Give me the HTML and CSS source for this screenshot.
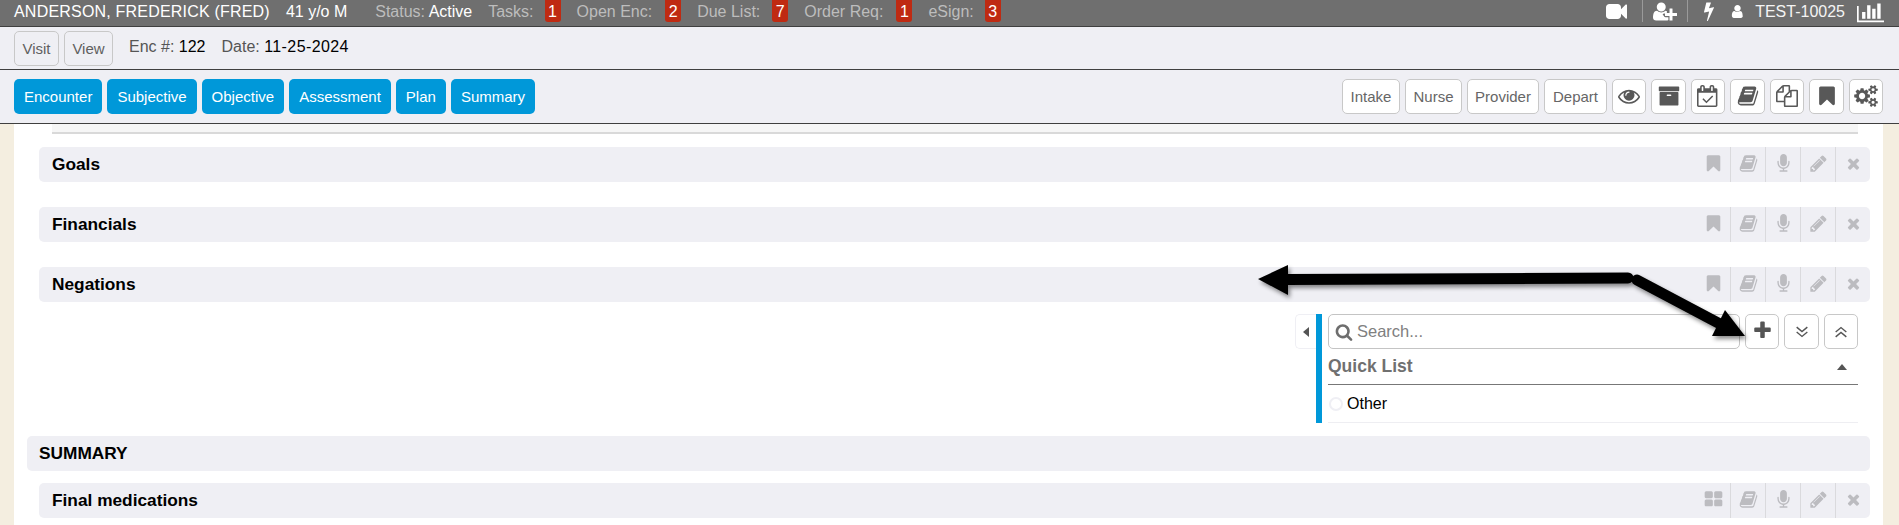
FILE: index.html
```html
<!DOCTYPE html>
<html lang="en">
<head>
<meta charset="utf-8">
<title>Encounter</title>
<link rel="stylesheet" href="styles.css">
</head>
<body>
<svg class="sprite" xmlns="http://www.w3.org/2000/svg">
  <symbol id="i-eye" viewBox="0 0 1792 1792"><path d="M1664 960q-152-236-381-353 61 104 61 225 0 185-131.500 316.500t-316.500 131.500-316.500-131.500-131.500-316.500q0-121 61-225-229 117-381 353 133 205 333.500 326.500t434.500 121.500 434.500-121.500 333.500-326.500zm-720-384q0-20-14-34t-34-14q-125 0-214.500 89.500t-89.500 214.500q0 20 14 34t34 14 34-14 14-34q0-86 61-147t147-61q20 0 34-14t14-34zm848 384q0 34-20 69-140 230-376.500 368.500t-499.500 138.500-499.500-139-376.500-368q-20-35-20-69t20-69q140-229 376.500-368t499.500-139 499.500 139 376.500 368q20 35 20 69z"/></symbol>
  <symbol id="i-bookmark" viewBox="0 0 1792 1792"><path d="M1420 128q23 0 44 9 33 13 52.500 41t19.500 62v1289q0 34-19.500 62t-52.500 41q-19 8-44 8-48 0-83-32l-441-424-441 424q-36 33-83 33-23 0-44-9-33-13-52.500-41t-19.500-62v-1289q0-34 19.500-62t52.500-41q21-9 44-9h1048z"/></symbol>
  <symbol id="i-plus" viewBox="0 0 1792 1792"><path d="M1600 736v192q0 40-28 68t-68 28h-416v416q0 40-28 68t-68 28h-192q-40 0-68-28t-28-68v-416h-416q-40 0-68-28t-28-68v-192q0-40 28-68t68-28h416v-416q0-40 28-68t68-28h192q40 0 68 28t28 68v416h416q40 0 68 28t28 68z"/></symbol>
  <symbol id="i-times" viewBox="0 0 1792 1792"><path d="M1490 1322q0 40-28 68l-136 136q-28 28-68 28t-68-28l-294-294-294 294q-28 28-68 28t-68-28l-136-136q-28-28-28-68t28-68l294-294-294-294q-28-28-28-68t28-68l136-136q28-28 68-28t68 28l294 294 294-294q28-28 68-28t68 28l136 136q28 28 28 68t-28 68l-294 294 294 294q28 28 28 68z"/></symbol>
  <symbol id="i-pencil" viewBox="0 0 1792 1792"><path d="M491 1536l91-91-235-235-91 91v107h128v128h107zm523-928q0-22-22-22-10 0-17 7l-542 542q-7 7-7 17 0 22 22 22 10 0 17-7l542-542q7-7 7-17zm-54-192l416 416-832 832h-416v-416zm683 96q0 53-37 90l-166 166-416-416 166-165q36-38 90-38 53 0 91 38l235 234q37 39 37 91z"/></symbol>
  <symbol id="i-search" viewBox="0 0 1792 1792"><path d="M1216 832q0-185-131.500-316.500t-316.500-131.500-316.500 131.500-131.500 316.500 131.500 316.500 316.500 131.500 316.500-131.500 131.500-316.500zm512 832q0 52-38 90t-90 38q-54 0-90-38l-343-342q-179 124-399 124-143 0-273.500-55.500t-225-150-150-225-55.500-273.500 55.500-273.500 150-225 225-150 273.500-55.500 273.500 55.500 225 150 150 225 55.500 273.500q0 220-124 399l343 343q37 37 37 90z"/></symbol>
  <symbol id="i-user" viewBox="0 0 1792 1792"><path d="M1536 1399q0 109-62.500 187t-166.500 78h-854q-104 0-166.500-78t-62.500-187q0-85 8.500-160.500t31.500-152 58.500-131 94-89 134.500-34.500q131 128 313 128t313-128q76 0 134.500 34.500t94 89 58.500 131 31.500 152 8.500 160.500zm-256-887q0 159-112.500 271.500t-271.500 112.500-271.500-112.500-112.500-271.500 112.500-271.500 271.500-112.500 271.500 112.500 112.500 271.500z"/></symbol>
  <symbol id="i-video" viewBox="0 0 1792 1792"><path d="M1792 352v1088q0 42-39 59-13 5-25 5-27 0-45-19l-403-403v166q0 119-84.500 203.500t-203.500 84.500h-704q-119 0-203.500-84.500t-84.500-203.500v-704q0-119 84.500-203.500t203.500-84.500h704q119 0 203.500 84.500t84.500 203.500v165l403-402q18-19 45-19 12 0 25 5 39 17 39 59z"/></symbol>
  <symbol id="i-bolt" viewBox="0 0 1792 1792"><path d="M1333 566q18 20 7 44l-540 1157q-13 25-42 25-4 0-14-2-17-5-25.500-19t-4.500-30l197-808-406 101q-4 1-12 1-18 0-31-11-18-15-13-39l201-825q4-14 16-23t28-9h328q19 0 32 12.500t13 29.500q0 8-5 18l-171 463 396-98q8-2 12-2 19 0 34 15z"/></symbol>
  <symbol id="i-mic" viewBox="0 0 1792 1792"><path d="M1472 704v128q0 221-147.500 384.500t-364.500 187.500v132h256q26 0 45 19t19 45-19 45-45 19h-640q-26 0-45-19t-19-45 19-45 45-19h256v-132q-217-24-364.500-187.500t-147.500-384.500v-128q0-26 19-45t45-19 45 19 19 45v128q0 185 131.500 316.500t316.500 131.500 316.500-131.500 131.500-316.500v-128q0-26 19-45t45-19 45 19 19 45zm-256-384v512q0 132-94 226t-226 94-226-94-94-226v-512q0-132 94-226t226-94 226 94 94 226z"/></symbol>
  <symbol id="i-book" viewBox="0 0 1792 1792"><path d="M1703 478q40 57 18 129l-275 906q-19 64-76.500 107.500t-122.500 43.500h-923q-77 0-148.500-53.500t-99.500-131.500q-24-67-2-127 0-4 3-27t4-37q1-8-3-21.500t-3-19.500q2-11 8-21t16.500-23.500 16.500-23.500q23-38 45-91.500t30-91.500q3-10 .5-30t-.5-28q3-11 17-28t17-23q21-36 42-92t25-90q1-9-2.500-32t.5-28q4-13 22-30.500t22-22.500q19-26 42.500-84.500t27.500-96.500q1-8-3-25.500t-2-26.500q2-8 9-18t18-23 17-21q8-12 16.500-30.500t15-35 16-36 19.500-32 26.500-23.500 36-11.500 47.500 5.500l-1 3q38-9 51-9h761q74 0 114 56t18 130l-274 906q-36 119-71.500 153.500t-128.500 34.500h-869q-27 0-38 15-11 16-1 43 24 70 144 70h923q29 0 56-15.500t35-41.500l300-987q7-22 5-57 38 15 59 43zm-1064 2q-4 13 2 22.500t20 9.500h608q13 0 25.500-9.500t16.500-22.500l21-64q4-13-2-22.500t-20-9.500h-608q-13 0-25.500 9.500t-16.500 22.500zm-83 256q-4 13 2 22.500t20 9.500h608q13 0 25.500-9.500t16.500-22.500l21-64q4-13-2-22.500t-20-9.500h-608q-13 0-25.500 9.500t-16.500 22.500z"/></symbol>
  <symbol id="i-files" viewBox="0 0 1792 1792"><path d="M1696 384q40 0 68 28t28 68v1216q0 40-28 68t-68 28h-960q-40 0-68-28t-28-68v-288h-544q-40 0-68-28t-28-68v-672q0-40 20-88t48-76l408-408q28-28 76-48t88-20h416q40 0 68 28t28 68v328q68-40 128-40h416zm-544 213l-299 299h299v-299zm-640-384l-299 299h299v-299zm196 647l316-316v-416h-384v416q0 40-28 68t-68 28h-416v640h512v-256q0-40 20-88t48-76zm956 804v-1152h-384v416q0 40-28 68t-68 28h-416v640h896z"/></symbol>
  <symbol id="i-archive" viewBox="0 0 1792 1792"><path d="M1088 832q0-26-19-45t-45-19h-256q-26 0-45 19t-19 45 19 45 45 19h256q26 0 45-19t19-45zm576-192v960q0 26-19 45t-45 19h-1408q-26 0-45-19t-19-45v-960q0-26 19-45t45-19h1408q26 0 45 19t19 45zm64-448v256q0 26-19 45t-45 19h-1536q-26 0-45-19t-19-45v-256q0-26 19-45t45-19h1536q26 0 45 19t19 45z"/></symbol>
  <symbol id="i-calendar" viewBox="0 0 1792 1792"><path d="M1303 964l-512 512q-10 9-23 9t-23-9l-288-288q-9-10-9-23t9-22l46-46q9-9 22-9t23 9l220 220 444-444q10-9 23-9t22 9l46 46q9 9 9 22t-9 23zm-1175 700h1408v-1024h-1408v1024zm384-1216v-288q0-14-9-23t-23-9h-64q-14 0-23 9t-9 23v288q0 14 9 23t23 9h64q14 0 23-9t9-23zm768 0v-288q0-14-9-23t-23-9h-64q-14 0-23 9t-9 23v288q0 14 9 23t23 9h64q14 0 23-9t9-23zm384-64v1280q0 52-38 90t-90 38h-1408q-52 0-90-38t-38-90v-1280q0-52 38-90t90-38h128v-96q0-66 47-113t113-47h64q66 0 113 47t47 113v96h384v-96q0-66 47-113t113-47h64q66 0 113 47t47 113v96h128q52 0 90 38t38 90z"/></symbol>
  <symbol id="i-cogs" viewBox="0 0 1920 1792"><path d="M896 896q0-106-75-181t-181-75-181 75-75 181 75 181 181 75 181-75 75-181zm768 512q0-52-38-90t-90-38-90 38-38 90q0 53 37.500 90.500t90.500 37.500 90.500-37.500 37.500-90.500zm0-1024q0-52-38-90t-90-38-90 38-38 90q0 53 37.500 90.500t90.500 37.500 90.500-37.500 37.500-90.500zm-384 421v185q0 10-7 19.500t-16 10.500l-155 24q-11 35-32 76 34 48 90 115 7 11 7 20 0 12-7 19-23 30-82.500 89.500t-78.500 59.500q-11 0-21-7l-115-90q-37 19-77 31-11 108-23 155-7 24-30 24h-186q-11 0-20-7.500t-10-17.500l-23-153q-34-10-75-31l-118 89q-7 7-20 7-11 0-21-8-144-133-144-160 0-9 7-19 10-14 41-53t47-61q-23-44-35-82l-152-24q-10-1-17-9.500t-7-19.500v-185q0-10 7-19.500t16-10.500l155-24q11-35 32-76-34-48-90-115-7-11-7-20 0-12 7-20 22-30 82-89t79-59q11 0 21 7l115 90q34-18 77-32 11-108 23-154 7-24 30-24h186q11 0 20 7.500t10 17.500l23 153q34 10 75 31l118-89q8-7 20-7 11 0 21 8 144 133 144 160 0 8-7 19-12 16-42 54t-45 60q23 48 34 82l152 23q10 2 17 10.500t7 19.500zm640 533v140q0 16-149 31-12 27-30 52 51 113 51 138 0 4-4 7-122 71-124 71-8 0-46-47t-52-68q-20 2-30 2t-30-2q-14 21-52 68t-46 47q-2 0-124-71-4-3-4-7 0-25 51-138-18-25-30-52-149-15-149-31v-140q0-16 149-31 13-29 30-52-51-113-51-138 0-4 4-7 4-2 35-20t59-34 30-16q8 0 46 46.500t52 67.500q20-2 30-2t30 2q51-71 92-112l6-2q4 0 124 70 4 3 4 7 0 25-51 138 17 23 30 52 149 15 149 31zm0-1024v140q0 16-149 31-12 27-30 52 51 113 51 138 0 4-4 7-122 71-124 71-8 0-46-47t-52-68q-20 2-30 2t-30-2q-14 21-52 68t-46 47q-2 0-124-71-4-3-4-7 0-25 51-138-18-25-30-52-149-15-149-31v-140q0-16 149-31 13-29 30-52-51-113-51-138 0-4 4-7 4-2 35-20t59-34 30-16q8 0 46 46.500t52 67.500q20-2 30-2t30 2q51-71 92-112l6-2q4 0 124 70 4 3 4 7 0 25-51 138 17 23 30 52 149 15 149 31z"/></symbol>
  <symbol id="i-userplus" viewBox="0 0 2048 1792"><path d="M704 896q-159 0-271.500-112.500t-112.500-271.500 112.500-271.500 271.500-112.500 271.500 112.500 112.500 271.500-112.500 271.500-271.500 112.500zm960 128h352q13 0 22.500 9.500t9.500 22.500v192q0 13-9.500 22.500t-22.500 9.500h-352v352q0 13-9.500 22.500t-22.500 9.500h-192q-13 0-22.500-9.500t-9.500-22.500v-352h-352q-13 0-22.500-9.500t-9.500-22.500v-192q0-13 9.500-22.500t22.500-9.500h352v-352q0-13 9.500-22.500t22.500-9.500h192q13 0 22.500 9.500t9.500 22.500v352zm-736 224q0 52 38 90t90 38h256v238q-68 50-171 50h-874q-121 0-194-69t-73-190q0-53 3.500-103.500t14-109 26.500-108.500 43-97.500 62-81 85.500-53.500 111.500-20q19 0 39 17 79 61 154.500 91.500t164.500 30.500 164.500-30.500 154.500-91.500q20-17 39-17 78 0 133 33-11 42-11 99v96h-224q-52 0-90 38t-38 90z"/></symbol>
  <symbol id="i-chart" viewBox="0 0 2048 1792"><path d="M640 896v512h-256v-512h256zm384-512v1024h-256v-1024h256zm1024 1152v128h-2048v-1216h128v1088h1920zm-640-896v768h-256v-768h256zm384-384v1152h-256v-1152h256z"/></symbol>
  <symbol id="i-grid" viewBox="0 0 1792 1792"><path d="M832 1024v384q0 52-38 90t-90 38h-512q-52 0-90-38t-38-90v-384q0-52 38-90t90-38h512q52 0 90 38t38 90zm0-768v384q0 52-38 90t-90 38h-512q-52 0-90-38t-38-90v-384q0-52 38-90t90-38h512q52 0 90 38t38 90zm896 768v384q0 52-38 90t-90 38h-512q-52 0-90-38t-38-90v-384q0-52 38-90t90-38h512q52 0 90 38t38 90zm0-768v384q0 52-38 90t-90 38h-512q-52 0-90-38t-38-90v-384q0-52 38-90t90-38h512q52 0 90 38t38 90z"/></symbol>
  <symbol id="i-down" viewBox="0 0 18 18"><path d="M3 3.500l6 5 6-5M3 9l6 5 6-5" fill="none" stroke="currentColor" stroke-width="1.600"/></symbol>
  <symbol id="i-up" viewBox="0 0 18 18"><path d="M3 9l6-5 6 5M3 14.500l6-5 6 5" fill="none" stroke="currentColor" stroke-width="1.600"/></symbol>
</svg>

<header class="topbar">
  <span class="patient">ANDERSON, FREDERICK (FRED)</span>
  <span class="age">41 y/o M</span>
  <span class="label status">Status: <b>Active</b></span>
  <span class="label tasks">Tasks:</span><span class="badge">1</span>
  <span class="label stat">Open Enc:</span><span class="badge badge-far">2</span>
  <span class="label stat">Due List:</span><span class="badge badge-mid">7</span>
  <span class="label stat">Order Req:</span><span class="badge badge-far">1</span>
  <span class="label stat">eSign:</span><span class="badge">3</span>
  <div class="top-right">
    <svg class="ti ti-video"><use href="#i-video"/></svg>
    <span class="top-sep"></span>
    <svg class="ti ti-userplus"><use href="#i-userplus"/></svg>
    <span class="top-sep"></span>
    <svg class="ti ti-bolt"><use href="#i-bolt"/></svg>
    <svg class="ti ti-user"><use href="#i-user"/></svg>
    <span class="account">TEST-10025</span>
    <svg class="ti ti-chart"><use href="#i-chart"/></svg>
  </div>
</header>

<div class="subbar">
  <button class="ghost ghost-visit">Visit</button>
  <button class="ghost ghost-view">View</button>
  <span class="meta meta-enc">Enc #: <b>122</b></span>
  <span class="meta meta-date">Date: <b>11-25-2024</b></span>
</div>

<nav class="navbar">
  <a class="tab">Encounter</a>
  <a class="tab">Subjective</a>
  <a class="tab">Objective</a>
  <a class="tab">Assessment</a>
  <a class="tab">Plan</a>
  <a class="tab">Summary</a>
  <div class="tools">
    <button class="tool tool-intake">Intake</button>
    <button class="tool tool-nurse">Nurse</button>
    <button class="tool tool-provider">Provider</button>
    <button class="tool tool-depart">Depart</button>
    <button class="tool tool-icon"><svg><use href="#i-eye"/></svg></button>
    <button class="tool tool-icon tool-icon-w"><svg><use href="#i-archive"/></svg></button>
    <button class="tool tool-icon"><svg><use href="#i-calendar"/></svg></button>
    <button class="tool tool-icon tool-icon-w"><svg><use href="#i-book"/></svg></button>
    <button class="tool tool-icon"><svg><use href="#i-files"/></svg></button>
    <button class="tool tool-icon tool-icon-w"><svg><use href="#i-bookmark"/></svg></button>
    <button class="tool tool-icon"><svg class="wide"><use href="#i-cogs"/></svg></button>
  </div>
</nav>

<main class="page">
  <div class="sheet">
    <div class="stub"></div>

    <section class="row">
      <h3>Goals</h3>
      <div class="row-actions">
        <span class="act"><svg><use href="#i-bookmark"/></svg></span>
        <span class="act"><svg><use href="#i-book"/></svg></span>
        <span class="act"><svg><use href="#i-mic"/></svg></span>
        <span class="act"><svg><use href="#i-pencil"/></svg></span>
        <span class="act"><svg><use href="#i-times"/></svg></span>
      </div>
    </section>

    <section class="row row-next">
      <h3>Financials</h3>
      <div class="row-actions">
        <span class="act"><svg><use href="#i-bookmark"/></svg></span>
        <span class="act"><svg><use href="#i-book"/></svg></span>
        <span class="act"><svg><use href="#i-mic"/></svg></span>
        <span class="act"><svg><use href="#i-pencil"/></svg></span>
        <span class="act"><svg><use href="#i-times"/></svg></span>
      </div>
    </section>

    <section class="row row-next">
      <h3>Negations</h3>
      <div class="row-actions">
        <span class="act"><svg><use href="#i-bookmark"/></svg></span>
        <span class="act"><svg><use href="#i-book"/></svg></span>
        <span class="act"><svg><use href="#i-mic"/></svg></span>
        <span class="act"><svg><use href="#i-pencil"/></svg></span>
        <span class="act"><svg><use href="#i-times"/></svg></span>
      </div>
    </section>

    <div class="picker-wrap">
      <div class="picker-tab"><span class="caret-left"></span></div>
      <div class="picker">
        <div class="picker-top">
          <div class="search">
            <svg><use href="#i-search"/></svg>
            <span>Search...</span>
          </div>
          <button class="square sq-plus"><svg><use href="#i-plus"/></svg></button>
          <button class="square sq-wide"><svg><use href="#i-down"/></svg></button>
          <button class="square"><svg><use href="#i-up"/></svg></button>
        </div>
        <div class="quick-head">
          <strong>Quick List</strong>
          <span class="caret-up"></span>
        </div>
        <label class="quick-item"><span class="radio"></span>Other</label>
      </div>
    </div>

    <section class="row row-summary">
      <h2>SUMMARY</h2>
    </section>

    <section class="row row-final">
      <h3>Final medications</h3>
      <div class="row-actions">
        <span class="act"><svg><use href="#i-grid"/></svg></span>
        <span class="act"><svg><use href="#i-book"/></svg></span>
        <span class="act"><svg><use href="#i-mic"/></svg></span>
        <span class="act"><svg><use href="#i-pencil"/></svg></span>
        <span class="act"><svg><use href="#i-times"/></svg></span>
      </div>
    </section>
  </div>
</main>

<svg class="arrows" width="1899" height="525" xmlns="http://www.w3.org/2000/svg">
  <path class="arrow-line" d="M1628 278 L1286 279.500"/>
  <polygon points="1258,279 1288,265 1288,295"/>
  <path class="arrow-line" d="M1637 280 L1722 325"/>
  <polygon points="1725,310 1712,336 1745,336"/>
</svg>
</body>
</html>
```
FILE: styles.css
```css
* { box-sizing: border-box; }
html, body { margin: 0; padding: 0; }
body {
  width: 1899px;
  height: 525px;
  overflow: hidden;
  position: relative;
  background: #fff;
  font-family: "Liberation Sans", Arial, sans-serif;
  color: #000;
}
button { font-family: inherit; margin: 0; cursor: pointer; }
.sprite { display: none; }

/* top bar */
.topbar {
  height: 27px;
  display: flex;
  align-items: flex-start;
  padding-left: 14px;
  background: #6f6f6f;
  border-bottom: 1px solid #3f3f3f;
  color: #fff;
  font-size: 16px;
  line-height: 23px;
}
.patient { letter-spacing: .2px; }
.age { margin-left: 16px; }
.label { color: #bdbdbd; }
.label b { color: #fff; font-weight: normal; }
.status { margin-left: 28px; }
.tasks { margin-left: 16px; }
.stat { margin-left: 16px; }
.badge {
  width: 16px;
  height: 22px;
  margin-left: 11px;
  background: #bf2a12;
  border-radius: 0 0 3px 3px;
  color: #fff;
  text-align: center;
}
.badge-mid { margin-left: 12px; }
.badge-far { margin-left: 13px; }
.top-right {
  margin-left: auto;
  height: 26px;
  padding-right: 15px;
  display: flex;
  align-items: flex-start;
}
.ti { fill: #fff; display: block; }
.ti-video { width: 21px; height: 21px; margin-top: 1px; }
.top-sep { width: 1px; height: 22px; background: #9a9a9a; margin: 0 10px 0 15px; }
.ti-userplus { width: 24px; height: 21px; margin-top: 1px; }
.ti-userplus + .top-sep { margin: 0 14px 0 10px; }
.ti-bolt { width: 20px; height: 20px; margin-top: 1px; margin-right: 11px; margin-left: -3px; }
.ti-user { width: 15px; height: 17px; margin-top: 3px; }
.account { margin-left: 10px; color: #f4f4f4; }
.ti-chart { width: 27px; height: 24px; margin-left: 12px; }

/* visit bar */
.subbar {
  height: 43px;
  display: flex;
  align-items: flex-start;
  padding: 4px 0 0 14px;
  background: #efeff4;
  border-bottom: 1px solid #3f3f3f;
}
.ghost {
  height: 35px;
  padding: 0;
  background: #efeff4;
  border: 1px solid #c8c8c8;
  border-radius: 5px;
  color: #5f5f5f;
  font-size: 15px;
}
.ghost-visit { width: 45px; }
.ghost-view { width: 49px; margin-left: 5px; }
.meta { font-size: 16px; line-height: 31px; color: #555; }
.meta b { font-weight: normal; color: #000; }
.meta-enc { margin-left: 16px; }
.meta-date { margin-left: 16px; }
.meta-date b { letter-spacing: .4px; }

/* nav */
.navbar {
  height: 54px;
  display: flex;
  align-items: flex-start;
  gap: 5px;
  padding: 9px 16px 0 14px;
  background: #efeff4;
  border-bottom: 1px solid #3f3f3f;
}
.tab {
  height: 35px;
  padding: 0 10px;
  border-radius: 5px;
  background: #0098d9;
  color: #fff;
  font-size: 15px;
  line-height: 35px;
}
.tools { margin-left: auto; display: flex; gap: 5px; }
.tool {
  height: 35px;
  padding: 0;
  background: #fff;
  border: 1px solid #c8c8c8;
  border-radius: 5px;
  color: #666;
  font-size: 15px;
}
.tool-intake { width: 58px; }
.tool-nurse { width: 57px; }
.tool-provider { width: 72px; }
.tool-depart { width: 63px; }
.tool-icon { width: 34px; display: flex; align-items: center; justify-content: center; padding-bottom: 2px; }
.tool-icon-w { width: 35px; }
.tool-icon svg { width: 22px; height: 22px; fill: #585858; display: block; }
.tool-icon svg.wide { width: 24px; height: 22px; }

/* content */
.page {
  height: 401px;
  padding: 0 16px 0 14px;
  background: #f4eee0;
}
.sheet { height: 401px; background: #fff; padding: 0 13px 0 13px; }
.stub {
  height: 10px;
  margin: 0 12px 0 25px;
  background: #f6f6f6;
  border-bottom: 2px solid #d9d9d9;
}
.row {
  height: 35px;
  margin: 13px 0 0 12px;
  display: flex;
  align-items: center;
  padding-left: 13px;
  background: #efeff4;
  border-radius: 5px;
}
.row-next { margin-top: 25px; }
.row h3, .row h2 { margin: 0; font-size: 17.3px; font-weight: bold; color: #000; }
.row-summary { margin: 13px 0 0 0; padding-left: 12px; }
.row-final { margin-top: 12px; }
.row-actions { margin-left: auto; display: flex; height: 35px; }
.act {
  width: 35px;
  height: 35px;
  display: flex;
  align-items: center;
  justify-content: center;
  padding: 0 0 2px 1px;
  border-left: 1px solid #dadadd;
}
.act:first-child { border-left: 0; }
.act svg { width: 19px; height: 19px; fill: #bcbcc0; display: block; }
.act:last-child svg { width: 17px; height: 17px; }

/* quick list panel */
.picker-wrap {
  display: flex;
  justify-content: flex-end;
  margin: 12px 12px 0 0;
}
.picker-tab {
  width: 21px;
  height: 35px;
  display: flex;
  align-items: center;
  justify-content: center;
  border: 1px solid #efeff4;
  border-right: 0;
  border-radius: 5px 0 0 5px;
}
.caret-left {
  width: 0;
  height: 0;
  border: 5px solid transparent;
  border-left: 0;
  border-right: 6px solid #555;
}
.picker {
  width: 542px;
  height: 109px;
  padding-left: 6px;
  border-left: 6px solid #0098d9;
}
.picker-top { display: flex; gap: 5px; }
.search {
  width: 412px;
  height: 35px;
  display: flex;
  align-items: center;
  gap: 4px;
  padding-left: 6px;
  border: 1px solid #c4c4c4;
  border-radius: 5px;
  color: #808080;
  font-size: 16.5px;
}
.search svg { width: 18px; height: 18px; fill: #6e6e6e; display: block; }
.square {
  width: 34px;
  height: 35px;
  padding: 0;
  display: flex;
  align-items: center;
  justify-content: center;
  background: #fff;
  border: 1px solid #c8c8c8;
  border-radius: 5px;
  color: #555;
}
.square svg { width: 16px; height: 16px; fill: currentColor; display: block; }
.sq-plus { padding-bottom: 2px; }
.sq-plus svg { width: 21px; height: 21px; }
.sq-wide { width: 35px; }
.quick-head {
  height: 36px;
  display: flex;
  align-items: center;
  justify-content: space-between;
  padding-right: 11px;
  border-bottom: 1px solid #777;
  color: #707070;
  font-size: 17.5px;
}
.caret-up {
  width: 0;
  height: 0;
  border: 5px solid transparent;
  border-top: 0;
  border-bottom: 6px solid #555;
}
.quick-item {
  height: 38px;
  display: flex;
  align-items: center;
  gap: 4px;
  padding-left: 1px;
  border-bottom: 1px solid #eeeef2;
  font-size: 16px;
}
.radio {
  width: 14px;
  height: 14px;
  border: 2px solid #efeff4;
  border-radius: 50%;
}

/* annotation arrows */
.arrows {
  position: absolute;
  left: 0;
  top: 0;
  pointer-events: none;
  filter: drop-shadow(2px 3px 2px rgba(0, 0, 0, .45));
}
.arrow-line { fill: none; stroke: #000; stroke-width: 11; stroke-linecap: round; }
```
